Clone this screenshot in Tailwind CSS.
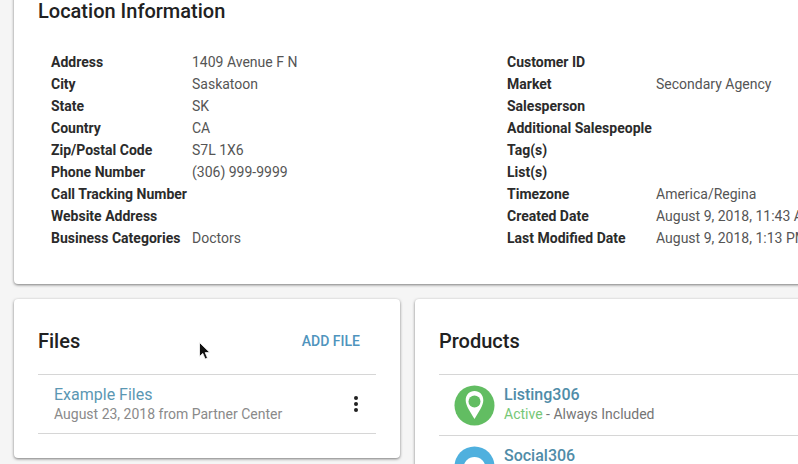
<!DOCTYPE html>
<html lang="en">
<head>
    <meta charset="UTF-8">
    <meta name="viewport" content="width=device-width, initial-scale=1.0">
    <title>Location Information</title>
    <script src="https://cdn.jsdelivr.net/npm/@tailwindcss/browser@4"></script>
</head>
<body class="h-[464px] w-[798px] overflow-hidden bg-[#f5f5f5] font-['Roboto',sans-serif] text-[14px] text-[#212121]">
    <div class="w-[830px] pl-[14px]">
        <!-- location card, top is scrolled off -->
        <section class="mt-[-20px] h-[304px] rounded bg-white pl-[24px] pt-[17px] shadow-[0_1px_3px_rgba(0,0,0,0.5)]">
            <h2 class="text-[20px] leading-[28px] font-medium text-[#212121]">Location Information</h2>
            <div class="mt-[26px] flex pl-[13px] leading-[22px]">
                <div class="grid w-[456px] grid-cols-[141px_1fr] content-start">
                    <div class="font-bold text-[#2b2b2b]">Address</div><div class="text-[#555]">1409 Avenue F N</div>
                    <div class="font-bold text-[#2b2b2b]">City</div><div class="text-[#555]">Saskatoon</div>
                    <div class="font-bold text-[#2b2b2b]">State</div><div class="text-[#555]">SK</div>
                    <div class="font-bold text-[#2b2b2b]">Country</div><div class="text-[#555]">CA</div>
                    <div class="font-bold text-[#2b2b2b]">Zip/Postal Code</div><div class="text-[#555]">S7L 1X6</div>
                    <div class="font-bold text-[#2b2b2b]">Phone Number</div><div class="text-[#555]">(306) 999-9999</div>
                    <div class="font-bold text-[#2b2b2b]">Call Tracking Number</div><div></div>
                    <div class="font-bold text-[#2b2b2b]">Website Address</div><div></div>
                    <div class="font-bold text-[#2b2b2b]">Business Categories</div><div class="text-[#555]">Doctors</div>
                </div>
                <div class="grid grid-cols-[149px_1fr] content-start">
                    <div class="font-bold text-[#2b2b2b]">Customer ID</div><div></div>
                    <div class="font-bold text-[#2b2b2b]">Market</div><div class="text-[#555]">Secondary Agency</div>
                    <div class="font-bold text-[#2b2b2b]">Salesperson</div><div></div>
                    <div class="font-bold whitespace-nowrap text-[#2b2b2b]">Additional Salespeople</div><div></div>
                    <div class="font-bold text-[#2b2b2b]">Tag(s)</div><div></div>
                    <div class="font-bold text-[#2b2b2b]">List(s)</div><div></div>
                    <div class="font-bold text-[#2b2b2b]">Timezone</div><div class="text-[#555]">America/Regina</div>
                    <div class="font-bold text-[#2b2b2b]">Created Date</div><div class="whitespace-nowrap text-[#555]">August 9, 2018, 11:43 AM</div>
                    <div class="font-bold text-[#2b2b2b]">Last Modified Date</div><div class="whitespace-nowrap text-[#555]">August 9, 2018, 1:13 PM</div>
                </div>
            </div>
        </section>

        <div class="mt-[15px] flex items-start gap-[15px]">
            <!-- files -->
            <section class="h-[159px] w-[386px] shrink-0 rounded bg-white px-[24px] shadow-[0_1px_3px_rgba(0,0,0,0.5)]">
                <div class="flex h-[76px] items-center justify-between border-b border-[#d6d6d6] pt-[9px]">
                    <h2 class="text-[20px] font-medium">Files</h2>
                    <span class="mr-[16px] text-[14px] font-medium text-[#4f94bd]">ADD FILE</span>
                </div>
                <div class="flex h-[59px] items-center justify-between border-b border-[#d6d6d6] pl-[16px] pr-[18px]">
                    <div>
                        <div class="text-[16px] leading-[20px] text-[#5b97b3]">Example Files</div>
                        <div class="text-[14px] leading-[19px] text-[#8a8a8a]">August 23, 2018 from Partner Center</div>
                    </div>
                    <svg class="h-[16px] w-[4px]" viewBox="0 0 4 16" fill="#212121">
                        <circle cx="2" cy="2" r="2"/><circle cx="2" cy="8" r="2"/><circle cx="2" cy="14" r="2"/>
                    </svg>
                </div>
            </section>

            <!-- products -->
            <section class="h-[220px] flex-1 rounded bg-white pl-[24px] shadow-[0_1px_3px_rgba(0,0,0,0.5)]">
                <div class="flex h-[76px] items-center border-b border-[#d6d6d6] pt-[9px]">
                    <h2 class="text-[20px] font-medium">Products</h2>
                </div>
                <div class="flex h-[61px] items-center gap-[9px] border-b border-[#d6d6d6] pl-[15px]">
                    <svg class="h-[41px] w-[41px] shrink-0" viewBox="0 0 41 41">
                        <circle cx="20.5" cy="20.5" r="20" fill="#62bd62"/>
                        <path d="M20.5 6c-5.100 0-8.800 3.900-8.800 9.200 0 5.300 4.200 11 8.800 18.800 4.600-7.800 8.800-13.500 8.800-18.800 0-5.300-3.700-9.200-8.800-9.200z" fill="#fff"/>
                        <circle cx="20.500" cy="16.500" r="6" fill="#62bd62"/>
                    </svg>
                    <div class="mt-[-2px]">
                        <div class="text-[16px] leading-[20px] font-medium text-[#4f8ca8]">Listing306</div>
                        <div class="text-[14px] leading-[19px] text-[#757575]"><span class="text-[#76c776]">Active</span> - Always Included</div>
                    </div>
                </div>
                <div class="flex h-[61px] items-start gap-[9px] pl-[15px] pt-[10px]">
                    <svg class="h-[41px] w-[41px] shrink-0" viewBox="0 0 41 41">
                        <circle cx="20.500" cy="20.500" r="20" fill="#4fb0de"/>
                        <circle cx="20.500" cy="22" r="11" fill="#fff"/>
                    </svg>
                    <div class="text-[16px] leading-[20px] font-medium text-[#4f8ca8]">Social306</div>
                </div>
            </section>
        </div>
    </div>

    <!-- mouse pointer caught in the capture -->
    <svg class="absolute left-[199px] top-[342px] h-[18px] w-[12px]" viewBox="0 0 12 18">
        <path d="M0.500 0.500v14l3.300-3.100 2.300 5.600 2.400-1-2.300-5.400h4.600z" fill="#111" stroke="#fff" stroke-width="0.800"/>
    </svg>
</body>
</html>
